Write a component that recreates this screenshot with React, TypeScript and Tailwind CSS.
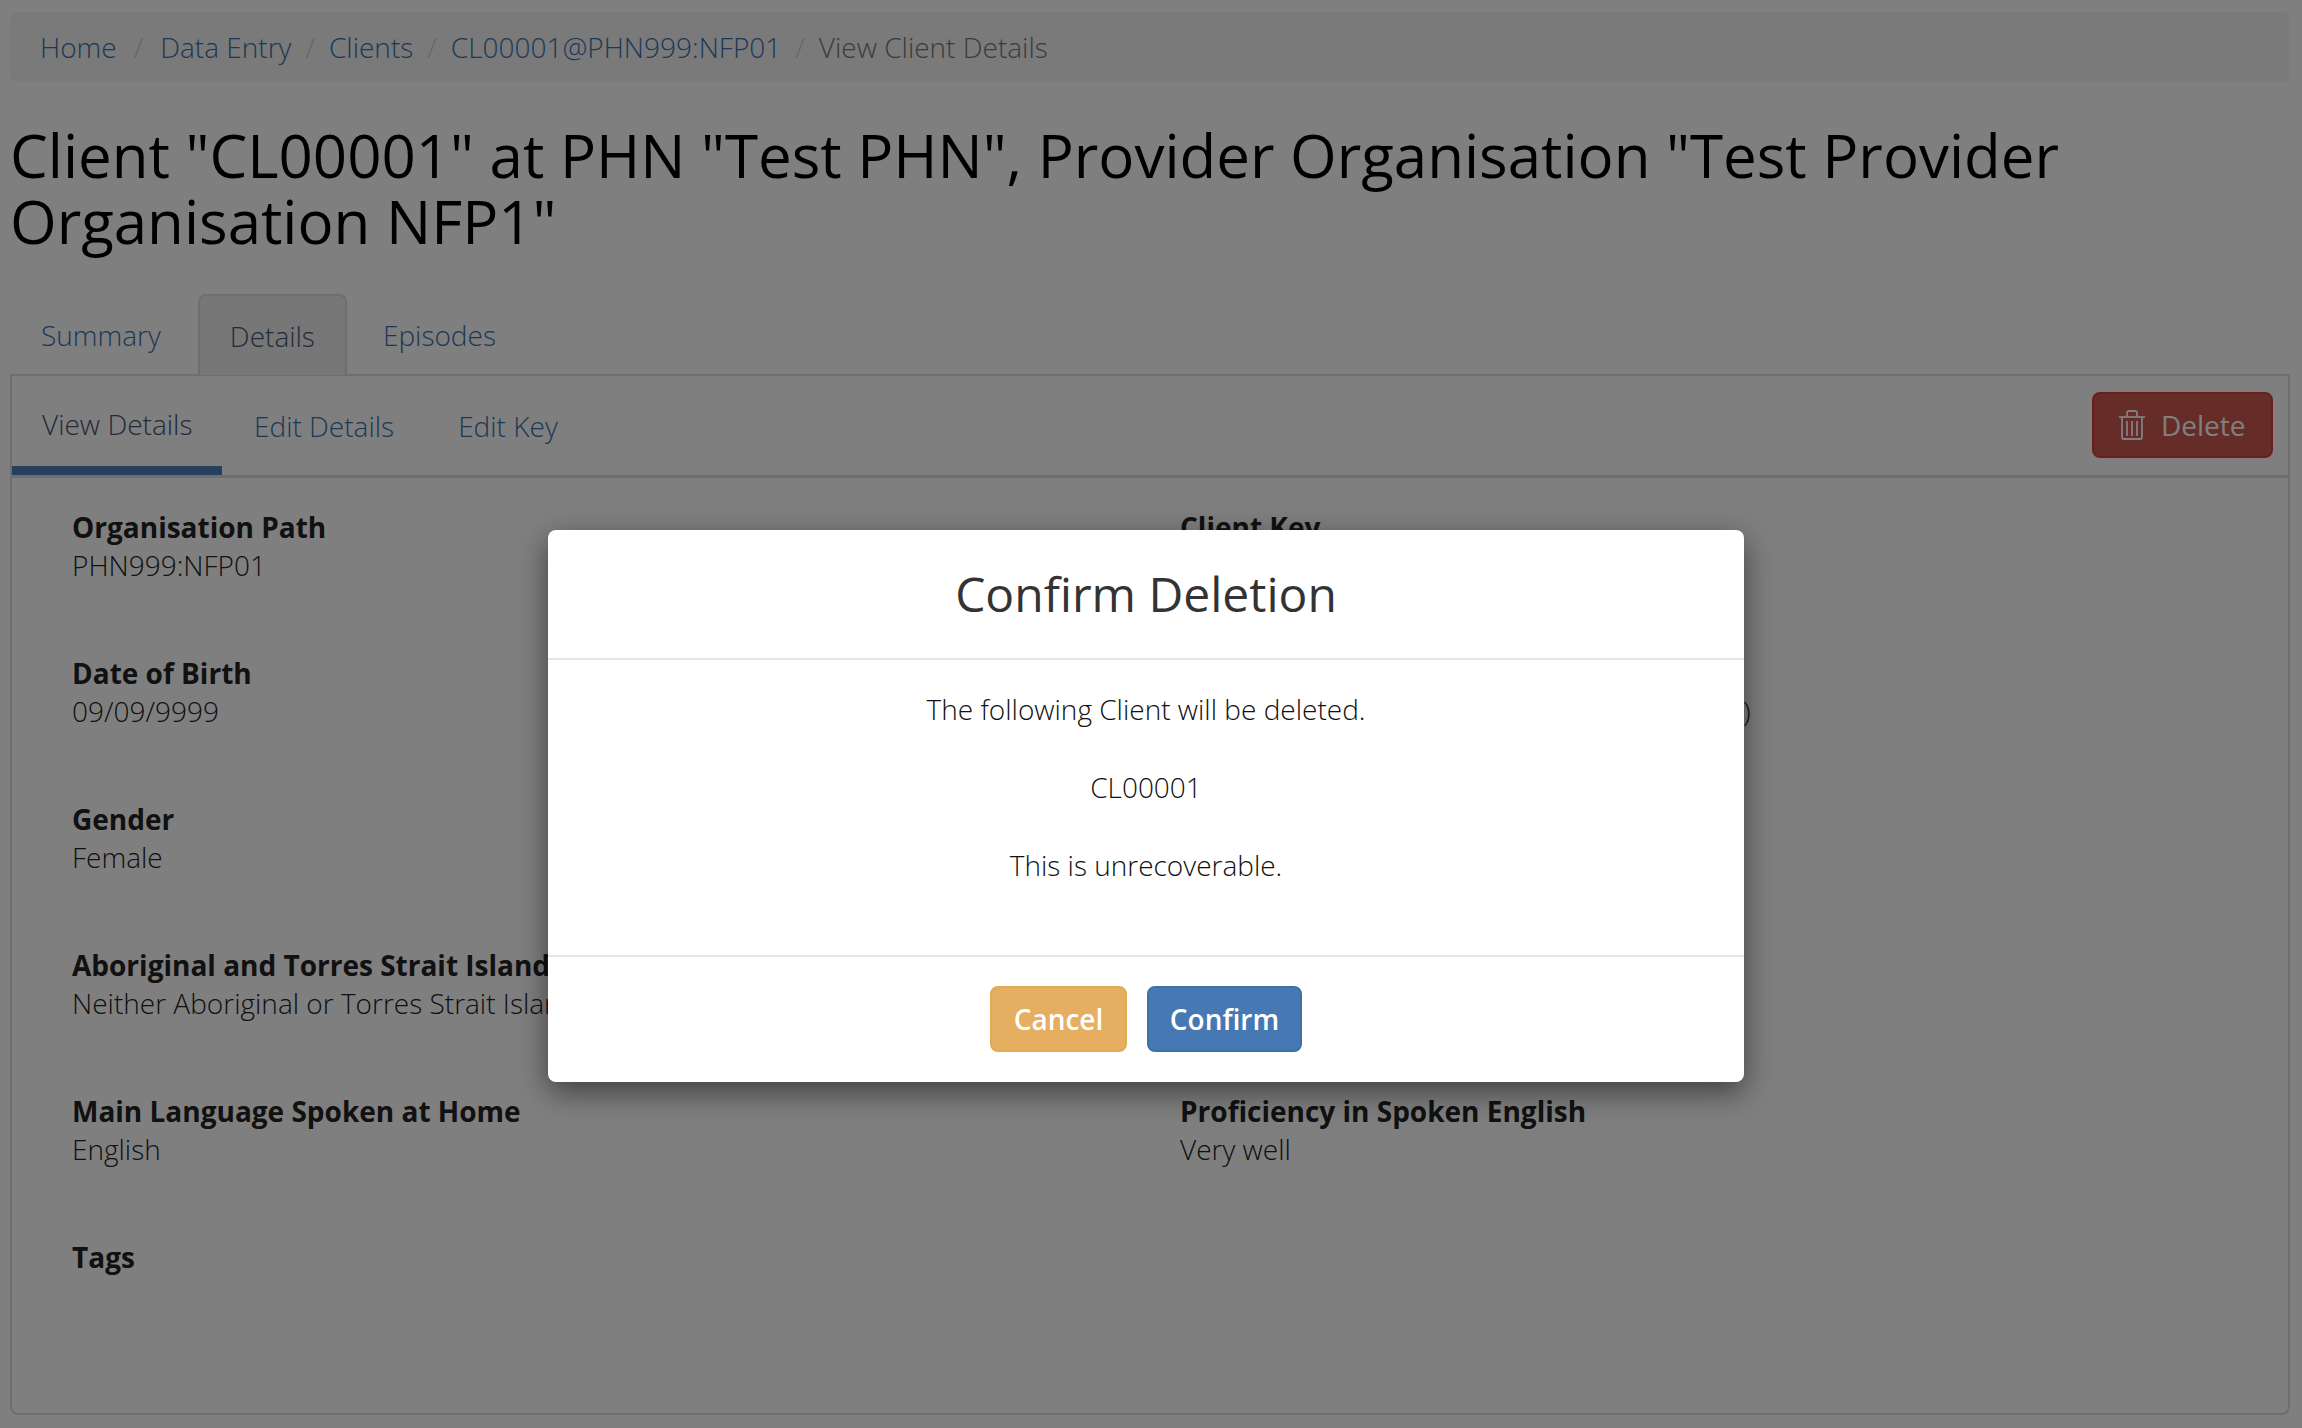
const crumbs = ['Home', 'Data Entry', 'Clients', 'CL00001@PHN999:NFP01'];

const rows = [
  [
    { label: 'Organisation Path', value: 'PHN999:NFP01' },
    { label: 'Client Key', value: 'CL00001' },
  ],
  [
    { label: 'Date of Birth', value: '09/09/9999' },
    { label: 'Date of Birth Accuracy', value: 'Accurate (day, month and year are all correct)' },
  ],
  [{ label: 'Gender', value: 'Female' }],
  [
    {
      label: 'Aboriginal and Torres Strait Islander Status',
      value: 'Neither Aboriginal or Torres Strait Islander',
    },
  ],
  [
    { label: 'Main Language Spoken at Home', value: 'English' },
    { label: 'Proficiency in Spoken English', value: 'Very well' },
  ],
  [{ label: 'Tags', value: '' }],
];

function TrashIcon() {
  return (
    <svg className="w-[26px] h-[30px]" viewBox="0 0 26 30" fill="none" stroke="currentColor" strokeWidth={1.8}>
      <path d="M0 7h26" />
      <path d="M8 6V3a2 2 0 0 1 2-2h6a2 2 0 0 1 2 2v3" />
      <path d="M3 8v19a2 2 0 0 0 2 2h16a2 2 0 0 0 2-2V8" />
      <path d="M8 11v15M13 11v15M18 11v15" />
    </svg>
  );
}

export default function App() {
  return (
    <div className="relative w-[2302px] h-[1428px] overflow-hidden bg-white pl-[10px] pr-[12px] pt-[12px] font-['Open_Sans',sans-serif] text-[28px] text-[#222]">
      <nav className="flex items-center h-[70px] pl-[30px] rounded-lg bg-[#f5f5f5] font-light">
        {crumbs.map((c, i) => (
          <span key={c} className="flex items-center">
            <span className="text-[#3a70ad]">{c}</span>
            <span className={i === 0 ? 'px-[17px] text-[#ccc]' : 'px-[14px] text-[#ccc]'}>/</span>
          </span>
        ))}
        <span className="text-[#777]">View Client Details</span>
      </nav>

      <h1 className="mt-[40px] text-[60px] leading-[66px] font-normal text-black">
        Client "CL00001" at PHN "Test PHN", Provider Organisation "Test Provider Organisation NFP1"
      </h1>

      <div className="flex mt-[40px] h-[81px] font-light">
        <a className="flex items-center pl-[31px] pr-[37px] text-[#3a70ad]">Summary</a>
        <a className="flex items-center px-[30px] border-2 border-b-0 border-[#ddd] rounded-t-lg bg-[#eee] text-[#44566f]">Details</a>
        <a className="flex items-center pl-[36px] text-[#3a70ad]">Episodes</a>
      </div>

      <div className="h-[1041px] border-2 border-[#ddd] rounded-b-lg -mt-[1px]">
        <div className="flex items-stretch justify-between h-[102px] border-b-[3px] border-[#ddd] pr-[15px] font-light">
          <div className="flex">
            <a className="flex items-center w-[210px] pl-[30px] pt-[6px] border-b-[9px] border-[#4f81bd] text-[#44566f]">View Details</a>
            <a className="flex items-center px-[32px] text-[#3a70ad]">Edit Details</a>
            <a className="flex items-center pl-[32px] text-[#3a70ad]">Edit Key</a>
          </div>
          <button className="flex items-center self-start mt-[16px] h-[66px] w-[181px] pl-[25px] gap-[16px] rounded-lg border-2 border-[#d43f3a] bg-[#cc5850] text-white font-normal">
            <TrashIcon />
            Delete
          </button>
        </div>

        <div className="pl-[60px] pt-[30px]">
          {rows.map((row) => (
            <div key={row[0].label} className="grid grid-cols-[1108px_1fr] h-[146px] leading-[38px] whitespace-nowrap">
              {row.map((f) => (
                <div key={f.label}>
                  <div className="font-bold">{f.label}</div>
                  <div className="font-light">{f.value}</div>
                </div>
              ))}
            </div>
          ))}
        </div>
      </div>

      <div className="absolute inset-0 bg-black/50" />

      <div className="absolute left-[548px] top-[530px] w-[1196px] rounded-lg bg-white shadow-[0_10px_30px_rgba(0,0,0,0.5)]">
        <div className="flex items-center justify-center h-[130px] border-b-2 border-[#e5e5e5] text-[48px] text-[#333]">
          Confirm Deletion
        </div>
        <div className="h-[295px] pt-[29px] text-center font-light leading-[40px] text-[#111]">
          <p className="mb-[38px]">The following Client will be deleted.</p>
          <p className="mb-[38px]">CL00001</p>
          <p>This is unrecoverable.</p>
        </div>
        <div className="flex justify-center gap-[20px] h-[127px] pt-[29px] border-t-2 border-[#e5e5e5]">
          <button className="w-[137px] h-[66px] rounded-lg border-2 border-[#e3a955] bg-[#e5ae60] text-white font-[550]">Cancel</button>
          <button className="w-[155px] h-[66px] rounded-lg border-2 border-[#3f70a8] bg-[#4679b3] text-white font-[550]">Confirm</button>
        </div>
      </div>
    </div>
  );
}
